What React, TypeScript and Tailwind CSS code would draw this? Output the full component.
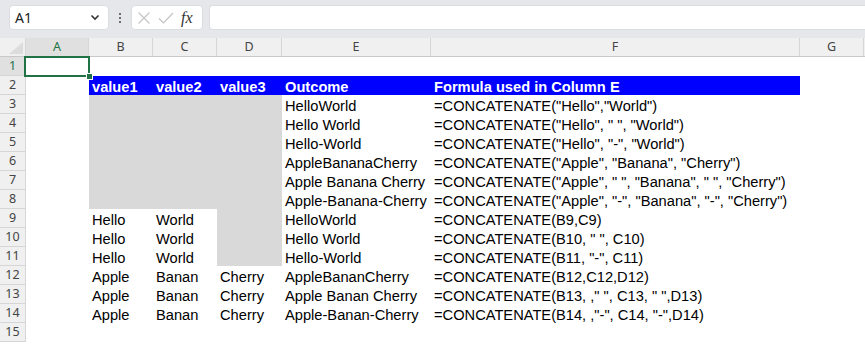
import React from "react";

const W = ["w-[63px]", "w-[64px]", "w-[64px]", "w-[65px]", "w-[149px]", "w-[369px]", "w-[64px]"];
const LETTERS = ["A", "B", "C", "D", "E", "F", "G"];

type Row = { cells: string[]; fill?: boolean[]; header?: boolean };

const rows: Row[] = [
  { cells: ["", "", "", "", "", "", ""] },
  { cells: ["", "value1", "value2", "value3", "Outcome", "Formula used in Column E", ""], header: true },
  { cells: ["", "", "", "", "HelloWorld", '=CONCATENATE("Hello","World")', ""], fill: [false, true, true, true] },
  { cells: ["", "", "", "", "Hello World", '=CONCATENATE("Hello", " ", "World")', ""], fill: [false, true, true, true] },
  { cells: ["", "", "", "", "Hello-World", '=CONCATENATE("Hello", "-", "World")', ""], fill: [false, true, true, true] },
  { cells: ["", "", "", "", "AppleBananaCherry", '=CONCATENATE("Apple", "Banana", "Cherry")', ""], fill: [false, true, true, true] },
  { cells: ["", "", "", "", "Apple Banana Cherry", '=CONCATENATE("Apple", " ", "Banana", " ", "Cherry")', ""], fill: [false, true, true, true] },
  { cells: ["", "", "", "", "Apple-Banana-Cherry", '=CONCATENATE("Apple", "-", "Banana", "-", "Cherry")', ""], fill: [false, true, true, true] },
  { cells: ["", "Hello", "World", "", "HelloWorld", "=CONCATENATE(B9,C9)", ""], fill: [false, false, false, true] },
  { cells: ["", "Hello", "World", "", "Hello World", '=CONCATENATE(B10, " ", C10)', ""], fill: [false, false, false, true] },
  { cells: ["", "Hello", "World", "", "Hello-World", '=CONCATENATE(B11, "-", C11)', ""], fill: [false, false, false, true] },
  { cells: ["", "Apple", "Banan", "Cherry", "AppleBananCherry", "=CONCATENATE(B12,C12,D12)", ""] },
  { cells: ["", "Apple", "Banan", "Cherry", "Apple Banan Cherry", '=CONCATENATE(B13, ," ", C13, " ",D13)', ""] },
  { cells: ["", "Apple", "Banan", "Cherry", "Apple-Banan-Cherry", '=CONCATENATE(B14, ,"-", C14, "-",D14)', ""] },
  { cells: ["", "", "", "", "", "", ""] },
];

export default function App() {
  return (
    <div className="w-[865px] h-[344px] overflow-hidden bg-white font-['Liberation_Sans',Arial,sans-serif]">
      {/* Toolbar */}
      <div className="h-[38px] bg-[#e6e7eb] flex items-start pt-[5px] pl-[9px]">
        <div className="w-[100px] h-[25px] bg-white rounded-[4px] border border-[#dcdde1] flex items-center justify-between pl-[5px] pr-[8px]">
          <span className="text-[14px] text-[#222] font-['Noto_Sans',sans-serif]">A1</span>
          <svg width="10" height="7" viewBox="0 0 10 7">
            <path d="M1.5 1.5 L5 5 L8.5 1.5" fill="none" stroke="#333" strokeWidth="1.6" />
          </svg>
        </div>
        <div className="w-[22px] h-[25px] flex flex-col items-center justify-center gap-[2px]">
          <span className="w-[2px] h-[2px] bg-[#444] rounded-full" />
          <span className="w-[2px] h-[2px] bg-[#444] rounded-full" />
          <span className="w-[2px] h-[2px] bg-[#444] rounded-full" />
        </div>
        <div className="w-[72px] h-[25px] bg-white rounded-[4px] border border-[#dcdde1] flex items-center pl-[5px]">
          <svg width="14" height="14" viewBox="0 0 14 14">
            <path d="M1.5 1.5 L12.5 12.5 M12.5 1.5 L1.5 12.5" stroke="#c4c4c4" strokeWidth="1.2" />
          </svg>
          <svg width="16" height="14" viewBox="0 0 16 14" className="ml-[7px]">
            <path d="M1 7.5 L5.5 12 L15 2" fill="none" stroke="#c4c4c4" strokeWidth="1.2" />
          </svg>
          <span className="ml-[7px] text-[16px] italic text-[#333] font-['Liberation_Serif',serif] leading-none">fx</span>
        </div>
        <div className="ml-[6px] flex-1 h-[25px] bg-white rounded-l-[4px] border border-r-0 border-[#dcdde1]" />
      </div>

      {/* Column header */}
      <div className="flex h-[19px] bg-[#f0f0f0] border-b border-[#c8c8c8] font-['Noto_Sans',sans-serif]">
        <div className="w-[26px] shrink-0 border-r border-[#d6d6d6] relative">
          <svg width="14" height="12" viewBox="0 0 14 12" className="absolute right-[2px] bottom-[2px]">
            <path d="M14 0 L14 12 L0 12 Z" fill="#dcdcdc" />
          </svg>
        </div>
        {LETTERS.map((l, i) => (
          <div
            key={l}
            className={`${W[i]} shrink-0 border-r border-[#d6d6d6] flex items-center justify-center text-[12.5px] ${
              i === 0 ? "bg-[#e0e0e0] text-[#217346]" : "text-[#444]"
            }`}
          >
            {l}
          </div>
        ))}
        <div className="flex-1" />
      </div>

      {/* Rows */}
      {rows.map((r, ri) => (
        <div key={ri} className="flex h-[19px]">
          <div
            className={`w-[26px] shrink-0 border-r border-b border-[#d6d6d6] flex items-center justify-center text-[12.5px] font-['Noto_Sans',sans-serif] ${
              ri === 0 ? "bg-[#e0e0e0] text-[#217346]" : "bg-[#f0f0f0] text-[#444]"
            }`}
          >
            {ri + 1}
          </div>
          {r.cells.map((c, ci) => {
            const isHeader = r.header && ci >= 1 && ci <= 5;
            const gray = r.fill && r.fill[ci];
            return (
              <div
                key={ci}
                className={`${W[ci]} shrink-0 relative whitespace-pre pl-[3px] pt-[3px] leading-[16px] text-[14.67px] ${
                  isHeader ? "bg-[#0000ff] text-white font-bold" : gray ? "bg-[#d9d9d9] text-black" : "text-black"
                }`}
              >
                {c}
                {ri === 0 && ci === 0 && (
                  <div className="absolute left-[-2px] top-[-1px] w-[66px] h-[21px] border-2 border-[#217346] z-10">
                    <div className="absolute right-[-5px] bottom-[-5px] w-[7px] h-[7px] bg-[#217346] border border-white" />
                  </div>
                )}
              </div>
            );
          })}
          <div className="flex-1" />
        </div>
      ))}
    </div>
  );
}
